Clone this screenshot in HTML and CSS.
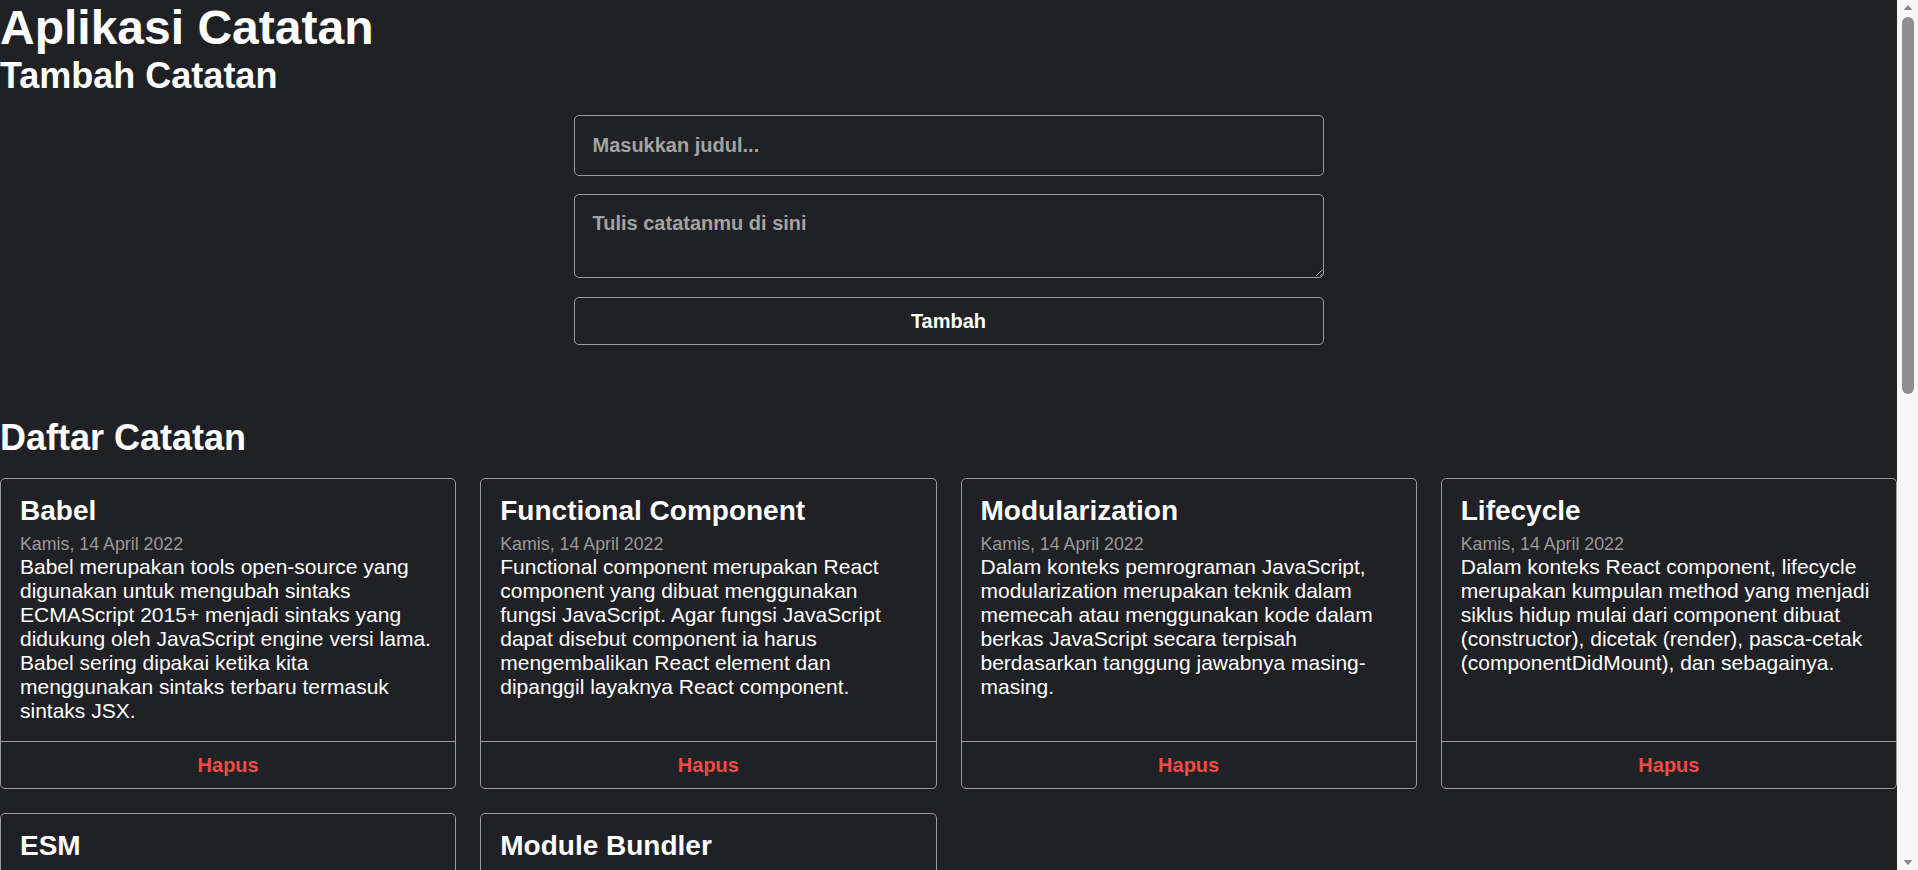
FILE: index.html
```html
<!DOCTYPE html>
<html lang="id">
<head>
<meta charset="utf-8">
<title>Aplikasi Catatan</title>
<link rel="stylesheet" href="styles.css">
</head>
<body>
<div class="app">
  <h1 class="app-title">Aplikasi Catatan</h1>
  <section class="add-section">
    <h2 class="section-title">Tambah Catatan</h2>
    <form class="note-form">
      <input class="note-input" type="text" placeholder="Masukkan judul...">
      <textarea class="note-textarea" placeholder="Tulis catatanmu di sini"></textarea>
      <button class="note-submit" type="button">Tambah</button>
    </form>
  </section>
  <section class="list-section">
    <h2 class="section-title list-title">Daftar Catatan</h2>
    <div class="notes">
      <article class="note">
        <div class="note-body">
          <h3 class="note-title">Babel</h3>
          <p class="note-date">Kamis, 14 April 2022</p>
          <p class="note-text">Babel merupakan tools open-source yang digunakan untuk mengubah sintaks ECMAScript 2015+ menjadi sintaks yang didukung oleh JavaScript engine versi lama. Babel sering dipakai ketika kita menggunakan sintaks terbaru termasuk sintaks JSX.</p>
        </div>
        <button class="note-delete" type="button">Hapus</button>
      </article>
      <article class="note">
        <div class="note-body">
          <h3 class="note-title">Functional Component</h3>
          <p class="note-date">Kamis, 14 April 2022</p>
          <p class="note-text">Functional component merupakan React component yang dibuat menggunakan fungsi JavaScript. Agar fungsi JavaScript dapat disebut component ia harus mengembalikan React element dan dipanggil layaknya React component.</p>
        </div>
        <button class="note-delete" type="button">Hapus</button>
      </article>
      <article class="note">
        <div class="note-body">
          <h3 class="note-title">Modularization</h3>
          <p class="note-date">Kamis, 14 April 2022</p>
          <p class="note-text">Dalam konteks pemrograman JavaScript, modularization merupakan teknik dalam memecah atau menggunakan kode dalam berkas JavaScript secara terpisah berdasarkan tanggung jawabnya masing-masing.</p>
        </div>
        <button class="note-delete" type="button">Hapus</button>
      </article>
      <article class="note">
        <div class="note-body">
          <h3 class="note-title">Lifecycle</h3>
          <p class="note-date">Kamis, 14 April 2022</p>
          <p class="note-text">Dalam konteks React component, lifecycle merupakan kumpulan method yang menjadi siklus hidup mulai dari component dibuat (constructor), dicetak (render), pasca-cetak (componentDidMount), dan sebagainya.</p>
        </div>
        <button class="note-delete" type="button">Hapus</button>
      </article>
      <article class="note">
        <div class="note-body">
          <h3 class="note-title">ESM</h3>
          <p class="note-date">Kamis, 14 April 2022</p>
          <p class="note-text">ESM (ECMAScript Module) merupakan format modularisasi standar JavaScript.</p>
        </div>
        <button class="note-delete" type="button">Hapus</button>
      </article>
      <article class="note">
        <div class="note-body">
          <h3 class="note-title">Module Bundler</h3>
          <p class="note-date">Kamis, 14 April 2022</p>
          <p class="note-text">Dalam konteks pemrograman JavaScript, module bundler merupakan tools yang digunakan untuk menggabungkan seluruh modul JavaScript yang digunakan oleh aplikasi menjadi satu berkas.</p>
        </div>
        <button class="note-delete" type="button">Hapus</button>
      </article>
    </div>
  </section>
</div>
<div class="scrollbar" aria-hidden="true">
  <svg class="scroll-arrow" width="21" height="17" viewBox="0 0 21 17"><path d="M6.5 10 L11 5 L15.5 10 Z" fill="#8a8a8a"/></svg>
  <div class="scroll-track"><div class="scroll-thumb"></div></div>
  <svg class="scroll-arrow" width="21" height="17" viewBox="0 0 21 17"><path d="M6.5 7 L11 12 L15.5 7 Z" fill="#8a8a8a"/></svg>
</div>
</body>
</html>
```

FILE: styles.css
```css
* {
  box-sizing: border-box;
}

html {
  background: #202124;
  overflow: hidden;
}

body {
  margin: 0;
  background: #202124;
  color: #ffffff;
  font-family: "Liberation Sans", Arial, sans-serif;
}

.app {
  width: calc(100% - 21px);
}

.app-title {
  margin: 0;
  font-size: 48px;
  font-weight: 700;
}

.section-title {
  margin: 0;
  font-size: 36px;
  font-weight: 700;
}

.add-section {
  margin-bottom: 72px;
}

.note-form {
  width: 750px;
  margin: 18px auto 0;
  display: flex;
  flex-direction: column;
}

.note-input,
.note-textarea,
.note-submit {
  display: block;
  width: 100%;
  background: transparent;
  color: #ffffff;
  border: 1px solid #9c9c9c;
  border-radius: 5px;
  font-family: "Liberation Sans", Arial, sans-serif;
  font-size: 20px;
  font-weight: 700;
}

.note-input {
  height: 61px;
  padding: 0 18px;
  margin-bottom: 18px;
}

.note-textarea {
  height: 84px;
  padding: 17px 18px;
  margin-bottom: 19px;
  resize: vertical;
  line-height: normal;
}

.note-input::placeholder,
.note-textarea::placeholder {
  color: #a3a3a3;
}

.note-submit {
  height: 48px;
  padding: 0;
  cursor: pointer;
}

.list-title {
  margin-bottom: 19px;
}

.notes {
  display: grid;
  grid-template-columns: repeat(4, 1fr);
  gap: 24px;
}

.note {
  display: flex;
  flex-direction: column;
  border: 1px solid #9c9c9c;
  border-radius: 5px;
}

.note-body {
  flex: 1;
  padding: 16px 21px 18px 19px;
}

.note-title {
  margin: 0 0 7px;
  font-size: 28px;
  font-weight: 700;
}

.note-date {
  margin: 0;
  font-size: 17.8px;
  color: #9a9a9a;
}

.note-text {
  margin: 0;
  font-size: 21px;
  color: #ffffff;
}

.note-delete {
  display: block;
  width: 100%;
  height: 47px;
  padding: 0;
  background: transparent;
  border: none;
  border-top: 1px solid #9c9c9c;
  border-radius: 0 0 5px 5px;
  color: #f24b45;
  font-family: "Liberation Sans", Arial, sans-serif;
  font-size: 20px;
  font-weight: 700;
  cursor: pointer;
}

.scrollbar {
  position: fixed;
  top: 0;
  right: 0;
  width: 21px;
  height: 100vh;
  background: #f7f7f7;
  display: flex;
  flex-direction: column;
}

.scroll-arrow {
  display: block;
  flex: none;
}

.scroll-track {
  flex: 1;
  padding: 0 4px 0 5px;
}

.scroll-thumb {
  width: 12px;
  height: 377px;
  background: #8f8f8f;
  border-radius: 6px;
}
```
